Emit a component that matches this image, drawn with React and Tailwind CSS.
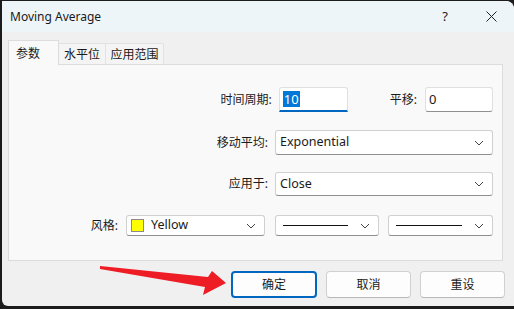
import React from 'react';

const font = { fontFamily: '"Segoe UI", "Noto Sans", "Noto Sans CJK SC", sans-serif' };

function Chevron() {
  return (
    <svg width="10" height="6" viewBox="0 0 10 6" className="shrink-0">
      <path d="M1 1 L5 5 L9 1" fill="none" stroke="#444" strokeWidth="1" />
    </svg>
  );
}

function Select({ className, children }) {
  return (
    <div className={`flex items-center justify-between bg-white border border-[#d0d0d0] border-b-[#8f8f8f] rounded-[3px] pl-[4px] pr-[8px] ${className}`}>
      <div className="flex items-center min-w-0 flex-1">{children}</div>
      <Chevron />
    </div>
  );
}

function Label({ children, className = '' }) {
  return <div className={`text-[12px] text-[#1a1a1a] text-right ${className}`}>{children}</div>;
}

function LineSample() {
  return <div className="flex-1 h-px bg-[#111] mr-[12px] ml-[3px]" />;
}

function Button({ children, primary }) {
  return (
    <button
      className={`h-[27px] rounded-[4px] bg-[#fdfdfd] text-[12px] text-[#1a1a1a] ${
        primary ? 'w-[86px] border-2 border-[#0067c0]' : 'w-[85px] border border-[#d0d0d0] border-b-[#b8b8b8]'
      }`}
    >
      {children}
    </button>
  );
}

export default function App() {
  return (
    <div className="w-[514px] h-[309px] bg-[#1c1c1c] overflow-hidden relative" style={font}>
      <div className="mt-px ml-[2px] h-[305px] bg-[#f0f0f0] rounded-tr-[8px] rounded-bl-[6px] flex flex-col">
        {/* title bar */}
        <div className="h-[31px] bg-[#eef5f9] rounded-tr-[8px] flex items-center justify-between pl-[8px]">
          <span className="text-[12px] text-[#1a1a1a]">Moving Average</span>
          <div className="flex items-center">
            <span className="w-[46px] text-center text-[13px] text-[#222]">?</span>
            <div className="w-[46px] flex justify-center">
              <svg width="11" height="11" viewBox="0 0 11 11">
                <path d="M0.5 0.5 L10.5 10.5 M10.5 0.5 L0.5 10.5" stroke="#222" strokeWidth="1" />
              </svg>
            </div>
          </div>
        </div>

        {/* tabs */}
        <div className="pl-[6px] pr-[11px] pt-[8px]">
          <div className="flex items-end h-[25px] relative z-10">
            <div className="h-[25px] w-[51px] bg-[#f9f9f9] border border-b-0 border-[#dcdcdc] text-[12px] text-[#1a1a1a] pl-[7px] pt-[4px]">参数</div>
            <div className="h-[21px] w-[47px] bg-[#f4f4f4] border-t border-r border-[#e2e2e2] text-[12px] text-[#1a1a1a] text-center pt-[2px] mb-px">水平位</div>
            <div className="h-[21px] w-[58px] bg-[#f4f4f4] border-t border-r border-[#e2e2e2] text-[12px] text-[#1a1a1a] text-center pt-[2px] mb-px">应用范围</div>
          </div>

          {/* panel */}
          <div className="-mt-px h-[197px] bg-[#f9f9f9] border border-[#dcdcdc] pr-[9px] pt-[22px] flex flex-col items-end">
            {/* row 1 */}
            <div className="flex items-center h-[25px]">
              <Label className="mr-[7px]">时间周期:</Label>
              <div className="w-[69px] h-[25px] bg-white border border-[#e0e0e0] border-b-2 border-b-[#0067c0] rounded-t-[3px] flex items-center pl-[3px]">
                <span className="bg-[#0078d7] text-white text-[13px] leading-[16px] px-px">10</span>
              </div>
              <Label className="ml-[42px] mr-[8px]">平移:</Label>
              <div className="w-[68px] h-[25px] bg-white border border-[#e0e0e0] border-b-[#8f8f8f] rounded-[3px] flex items-center pl-[3px] text-[13px] text-[#1a1a1a]">
                0
              </div>
            </div>

            {/* row 2 */}
            <div className="flex items-center h-[25px] mt-[18px]">
              <Label className="mr-[7px]">移动平均:</Label>
              <Select className="w-[218px] h-[25px]">
                <span className="text-[12.5px] text-[#1a1a1a]">Exponential</span>
              </Select>
            </div>

            {/* row 3 */}
            <div className="flex items-center h-[24px] mt-[17px]">
              <Label className="mr-[7px]">应用于:</Label>
              <Select className="w-[218px] h-[24px]">
                <span className="text-[12.5px] text-[#1a1a1a]">Close</span>
              </Select>
            </div>

            {/* row 4 */}
            <div className="flex items-center h-[21px] mt-[19px]">
              <Label className="mr-[8px]">风格:</Label>
              <Select className="w-[139px] h-[21px]">
                <span className="w-[13px] h-[13px] bg-[#ffff00] border border-[#8a8a8a] shrink-0" />
                <span className="ml-[7px] text-[12.5px] text-[#1a1a1a]">Yellow</span>
              </Select>
              <Select className="w-[104px] h-[21px] ml-[10px]">
                <LineSample />
              </Select>
              <Select className="w-[105px] h-[21px] ml-[9px]">
                <LineSample />
              </Select>
            </div>
          </div>
        </div>

        {/* buttons */}
        <div className="flex justify-end gap-[9px] pr-[9px] mt-[10px]">
          <Button primary>确定</Button>
          <Button>取消</Button>
          <Button>重设</Button>
        </div>
      </div>

      {/* red annotation arrow */}
      <svg className="absolute left-0 top-0 pointer-events-none" width="514" height="309" viewBox="0 0 514 309">
        <polygon points="100,266 208,277 212,271 226,283 203,295 205,287 100,269" fill="#ee1c25" />
      </svg>
    </div>
  );
}
